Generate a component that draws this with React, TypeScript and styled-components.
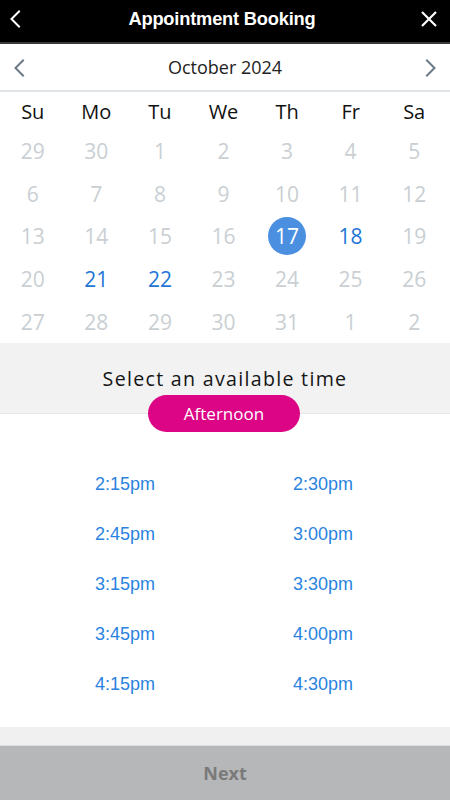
import styled, { createGlobalStyle } from "styled-components";

const GlobalStyle = createGlobalStyle`
  body {
    margin: 0;
    background: #ffffff;
    font-family: "Open Sans", "Liberation Sans", sans-serif;
  }
`;

const days = ["Su", "Mo", "Tu", "We", "Th", "Fr", "Sa"];

type DayState = "muted" | "open" | "selected";

const weeks: { n: number; s: DayState }[][] = [
  [29, 30, 1, 2, 3, 4, 5],
  [6, 7, 8, 9, 10, 11, 12],
  [13, 14, 15, 16, 17, 18, 19],
  [20, 21, 22, 23, 24, 25, 26],
  [27, 28, 29, 30, 31, 1, 2],
].map((row, r) =>
  row.map((n) => {
    let s: DayState = "muted";
    if (r === 2 && n === 17) s = "selected";
    else if ((r === 2 && n === 18) || (r === 3 && (n === 21 || n === 22)))
      s = "open";
    return { n, s };
  })
);

const times = [
  "2:15pm",
  "2:30pm",
  "2:45pm",
  "3:00pm",
  "3:15pm",
  "3:30pm",
  "3:45pm",
  "4:00pm",
  "4:15pm",
  "4:30pm",
];

const Chevron = ({ dir, color }: { dir: "left" | "right"; color: string }) => (
  <svg width="12" height="18" viewBox="0 0 12 18" fill="none">
    <path
      d={dir === "left" ? "M10 1.5 L2.5 9 L10 16.5" : "M2 1.5 L9.5 9 L2 16.5"}
      stroke={color}
      strokeWidth="2"
      strokeLinecap="square"
      strokeLinejoin="miter"
    />
  </svg>
);

const App = () => {
  return (
    <Page>
      <GlobalStyle />
      <Header>
        <HeaderIcon>
          <Chevron dir="left" color="#ffffff" />
        </HeaderIcon>
        <Title>Appointment Booking</Title>
        <HeaderIcon>
          <svg width="16" height="16" viewBox="0 0 16 16">
            <path
              d="M1 1 L15 15 M15 1 L1 15"
              stroke="#ffffff"
              strokeWidth="2.2"
            />
          </svg>
        </HeaderIcon>
      </Header>

      <MonthBar>
        <NavButton>
          <Chevron dir="left" color="#6b7a85" />
        </NavButton>
        <Month>October 2024</Month>
        <NavButton>
          <Chevron dir="right" color="#6b7a85" />
        </NavButton>
      </MonthBar>

      <Grid>
        {days.map((d) => (
          <DayName key={d}>{d}</DayName>
        ))}
        {weeks.flat().map((d, i) => (
          <DateCell key={i}>
            <DateNum $state={d.s}>{d.n}</DateNum>
          </DateCell>
        ))}
      </Grid>

      <TimeHeader>
        <TimeTitle>Select an available time</TimeTitle>
        <Pill>Afternoon</Pill>
      </TimeHeader>

      <Slots>
        {times.map((t) => (
          <Slot key={t}>{t}</Slot>
        ))}
      </Slots>

      <Spacer />
      <NextButton>Next</NextButton>
    </Page>
  );
};

export default App;

const Page = styled.div`
  width: 450px;
  height: 800px;
  display: flex;
  flex-direction: column;
  overflow: hidden;
  background: #ffffff;
`;

const Header = styled.div`
  height: 42px;
  background: #000000;
  border-bottom: 2px solid #3a3a3a;
  display: flex;
  align-items: center;
  justify-content: space-between;
  padding: 0 12px 0 6px;
  flex-shrink: 0;
`;

const HeaderIcon = styled.div`
  width: 18px;
  height: 18px;
  display: flex;
  align-items: center;
  justify-content: center;
  margin-top: -4px;
`;

const Title = styled.div`
  font-family: "Liberation Sans", Arial, sans-serif;
  font-weight: bold;
  font-size: 18.3px;
  color: #ffffff;
  margin-top: -4px;
  letter-spacing: -0.2px;
`;

const MonthBar = styled.div`
  height: 46px;
  border-bottom: 2px solid #dfe4e8;
  display: flex;
  align-items: center;
  justify-content: space-between;
  padding: 0 13px;
  flex-shrink: 0;
`;

const NavButton = styled.div`
  width: 12px;
  height: 18px;
  display: flex;
  margin-top: 2px;
`;

const Month = styled.div`
  font-size: 18px;
  color: #222222;
  margin-top: 0;
`;

const Grid = styled.div`
  display: grid;
  grid-template-columns: repeat(7, 1fr);
  padding: 6px 4px 0 1px;
  flex-shrink: 0;
`;

const DayName = styled.div`
  height: 37px;
  display: flex;
  align-items: center;
  justify-content: center;
  font-size: 20px;
  color: #111111;
  margin-top: -5px;
`;

const DateCell = styled.div`
  height: 42.6px;
  display: flex;
  align-items: center;
  justify-content: center;
`;

const DateNum = styled.div<{ $state: DayState }>`
  width: 38px;
  height: 38px;
  border-radius: 50%;
  display: flex;
  align-items: center;
  justify-content: center;
  font-size: 21px;
  background: ${(p) => (p.$state === "selected" ? "#4a8fe0" : "transparent")};
  color: ${(p) =>
    p.$state === "selected"
      ? "#ffffff"
      : p.$state === "open"
      ? "#1f76d6"
      : "#c9cfd3"};
`;

const TimeHeader = styled.div`
  height: 70px;
  background: #f2f2f2;
  border-bottom: 1px solid #e2e8ec;
  display: flex;
  flex-direction: column;
  align-items: center;
  justify-content: flex-end;
  position: relative;
  flex-shrink: 0;
`;

const TimeTitle = styled.div`
  font-size: 19.6px;
  letter-spacing: 1.3px;
  color: #151515;
  margin-bottom: 21px;
`;

const Pill = styled.div`
  position: absolute;
  left: 148px;
  top: 52px;
  width: 152px;
  height: 37px;
  border-radius: 19px;
  background: #dc0585;
  color: #ffffff;
  font-size: 17px;
  display: flex;
  align-items: center;
  justify-content: center;
`;

const Slots = styled.div`
  display: grid;
  grid-template-columns: 198px 198px;
  justify-content: start;
  padding: 45px 0 17px 26px;
  flex-shrink: 0;
`;

const Slot = styled.div`
  height: 50.2px;
  display: flex;
  align-items: center;
  justify-content: center;
  font-family: "Liberation Sans", Arial, sans-serif;
  font-size: 18px;
  color: #2a83e0;
`;

const Spacer = styled.div`
  flex: 1;
  background: #f0f0f0;
`;

const NextButton = styled.div`
  height: 54px;
  flex-shrink: 0;
  border-top: 1px solid #dcdcdc;
  background: #b6b7b9;
  color: #7a7a7a;
  font-weight: bold;
  font-size: 18px;
  display: flex;
  align-items: center;
  justify-content: center;
`;
